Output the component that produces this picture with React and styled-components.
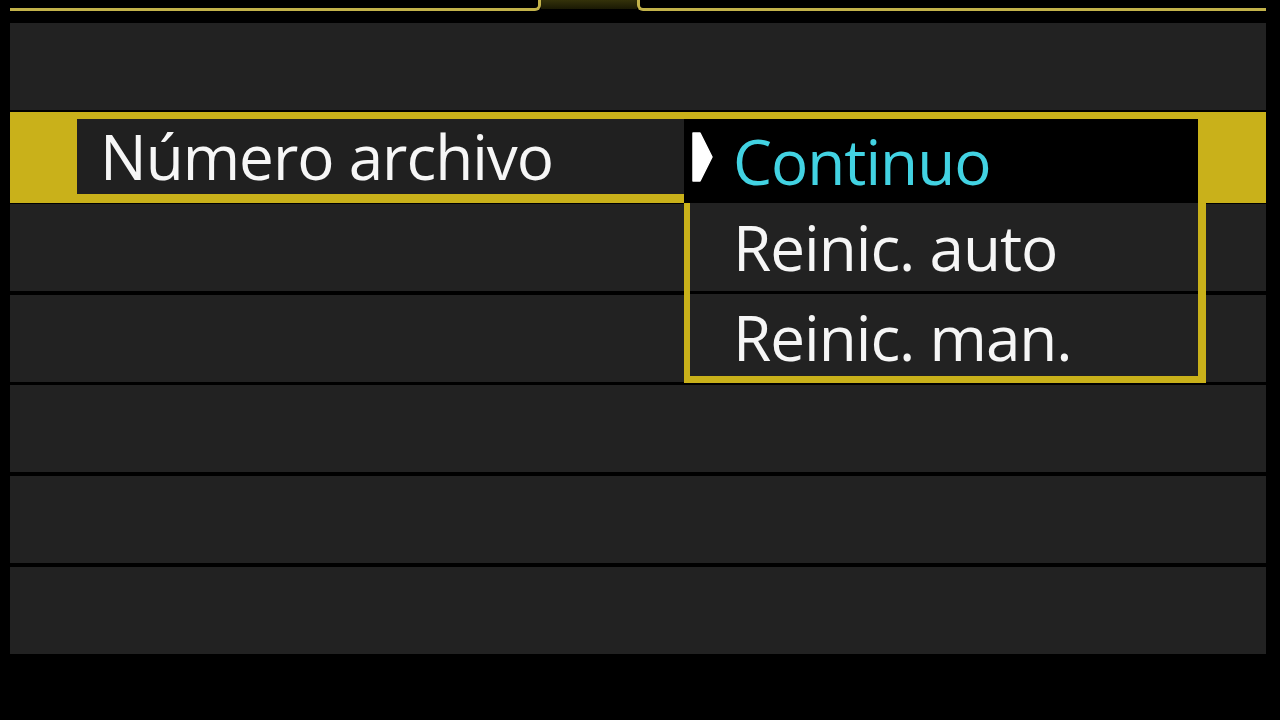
import React from 'react';
import styled, { createGlobalStyle } from 'styled-components';

const GlobalStyle = createGlobalStyle`
  html, body {
    margin: 0;
    padding: 0;
    background: #000;
  }
  body {
    width: 1280px;
    height: 720px;
    overflow: hidden;
    font-family: "Open Sans", "Noto Sans", sans-serif;
  }
`;

const Screen = styled.div`
  width: 1280px;
  height: 720px;
  background: #000;
  padding: 0 14px 0 10px;
  box-sizing: border-box;
`;

const TabBar = styled.div`
  display: flex;
  height: 11px;
`;

const TabLine = styled.div`
  box-sizing: border-box;
  height: 11px;
  border-bottom: 3px solid #c2b24a;
  ${(p) =>
    p.side === 'left'
      ? `width: 531px; border-right: 3px solid #c2b24a; border-bottom-right-radius: 6px;`
      : `flex: 1; border-left: 3px solid #c2b24a; border-bottom-left-radius: 6px;`}
`;

const ActiveTab = styled.div`
  width: 96px;
  height: 9px;
  background: linear-gradient(#34320a, #1a1904);
`;

const Menu = styled.div`
  display: flex;
  flex-direction: column;
  gap: 3.6px;
  margin-top: 12px;
`;

const Row = styled.div`
  height: 87px;
  background: #222;
`;

const ActiveRow = styled(Row)`
  position: relative;
  height: 91px;
  margin: -2px 0;
  background: #c9b11a;
  display: flex;
  align-items: flex-start;
  padding: 7px 0 0 67px;
  box-sizing: border-box;
`;

const Label = styled.div`
  width: 611px;
  height: 75px;
  background: #202020;
  color: #f6f6f6;
  font-size: 62px;
  letter-spacing: -1px;
  display: flex;
  align-items: center;
  padding-left: 23px;
  box-sizing: border-box;
  line-height: 1;
`;

const Popup = styled.div`
  position: absolute;
  z-index: 2;
  left: 674px;
  top: 7px;
  width: 522px;
  background: #c9b11a;
  padding: 0 8px 7px 6px;
  box-sizing: border-box;
  display: flex;
  flex-direction: column;
`;

const Option = styled.div`
  position: relative;
  display: flex;
  align-items: center;
  height: ${(p) => p.h}px;
  background: ${(p) => (p.selected ? '#000' : '#222')};
  margin-left: ${(p) => (p.selected ? '-6px' : '0')};
  margin-bottom: ${(p) => (p.sep ? '3px' : '0')};
  padding-left: ${(p) => (p.selected ? '49px' : '43px')};
  padding-top: ${(p) => p.pt || 0}px;
  box-sizing: border-box;
  color: ${(p) => (p.selected ? '#42d2e2' : '#f6f6f6')};
  font-size: 62px;
  letter-spacing: -1px;
  line-height: 1;
  &::after {
    content: '';
    display: ${(p) => (p.sep ? 'block' : 'none')};
    position: absolute;
    left: 0;
    right: 0;
    bottom: -3px;
    height: 3px;
    background: #000;
  }
`;

const Pointer = styled.svg`
  position: absolute;
  left: 8px;
  top: 13px;
`;

const App = () => {
  return (
    <Screen>
      <GlobalStyle />
      <TabBar>
        <TabLine side="left" />
        <ActiveTab />
        <TabLine side="right" />
      </TabBar>
      <Menu>
        <Row />
        <ActiveRow>
          <Label>Número archivo</Label>
          <Popup>
            <Option selected h={84}>
              <Pointer width="21" height="50" viewBox="0 0 21 50">
                <path d="M1 1 L8 1 L20 25 L8 49 L1 49 Z" fill="#fff" stroke="#fff" strokeWidth="1.5" strokeLinejoin="round" />
              </Pointer>
              Continuo
            </Option>
            <Option h={88} sep>Reinic. auto</Option>
            <Option h={82} pt={4}>Reinic. man.</Option>
          </Popup>
        </ActiveRow>
        <Row />
        <Row />
        <Row />
        <Row />
        <Row />
      </Menu>
    </Screen>
  );
};

export default App;
